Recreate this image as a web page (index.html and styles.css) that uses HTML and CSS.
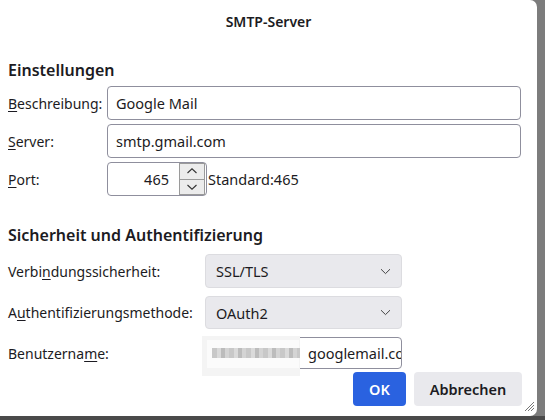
FILE: index.html
```html
<!DOCTYPE html>
<html lang="de">
<head>
<meta charset="utf-8">
<title>SMTP-Server</title>
<link rel="stylesheet" href="styles.css">
</head>
<body>
<div class="dialog">
  <div class="title">SMTP-Server</div>
  <div class="content">
    <h2 class="heading">Einstellungen</h2>
    <div class="grid grid-settings">
      <label class="label"><u>B</u>eschreibung:</label>
      <div class="input">Google Mail</div>
      <label class="label"><u>S</u>erver:</label>
      <div class="input">smtp.gmail.com</div>
      <label class="label"><u>P</u>ort:</label>
      <div class="port-row">
        <div class="port">
          <span class="port-value">465</span>
          <div class="spinner">
            <div class="spin spin-up"><svg width="12" height="8" viewBox="0 0 12 8"><path d="M1.5 6 L6 1.8 L10.5 6" fill="none" stroke="#333" stroke-width="1.1"/></svg></div>
            <div class="spin spin-down"><svg width="12" height="8" viewBox="0 0 12 8"><path d="M1.5 2 L6 6.2 L10.5 2" fill="none" stroke="#333" stroke-width="1.1"/></svg></div>
          </div>
        </div>
        <span class="default">Standard:465</span>
      </div>
    </div>

    <h2 class="heading heading-security">Sicherheit und Authentifizierung</h2>
    <div class="grid grid-security">
      <label class="label">Verbi<u>n</u>dungssicherheit:</label>
      <div class="select"><span>SSL/TLS</span><svg width="11" height="7" viewBox="0 0 11 7"><path d="M1 1.2 L5.5 5.6 L10 1.2" fill="none" stroke="#444" stroke-width="1"/></svg></div>
      <label class="label">A<u>u</u>thentifizierungsmethode:</label>
      <div class="select select-auth"><span>OAuth2</span><svg width="11" height="7" viewBox="0 0 11 7"><path d="M1 1.2 L5.5 5.6 L10 1.2" fill="none" stroke="#444" stroke-width="1"/></svg></div>
      <label class="label">Benutzerna<u>m</u>e:</label>
      <div class="user">
        <div class="input input-user"><span class="user-text">googlemail.com</span></div>
        <div class="blur"></div>
      </div>
    </div>

    <div class="buttons">
      <button class="btn btn-primary">OK</button>
      <button class="btn">Abbrechen</button>
    </div>
  </div>
  <svg class="grip" width="12" height="12" viewBox="0 0 12 12"><path d="M11 2 L2 11 M11 5 L5 11 M11 8 L8 11" stroke="#777" stroke-width="1"/></svg>
</div>
</body>
</html>
```
FILE: styles.css
```css
html, body {
  margin: 0;
  padding: 0;
}
body {
  width: 545px;
  height: 420px;
  background: linear-gradient(to bottom, #7c7c7c 0, #7c7c7c 416px, #4a4a4a 416px);
  font-family: "Noto Sans", "Open Sans", sans-serif;
  color: #1c1b22;
  font-size: 14px;
  overflow: hidden;
}
.dialog {
  position: relative;
  width: 537px;
  height: 416px;
  background: #ffffff;
  border-radius: 0 7px 7px 0;
}
.title {
  height: 44px;
  line-height: 44px;
  text-align: center;
  font-size: 14px;
  font-weight: 600;
}
.content {
  padding: 0 15px 0 8px;
}
.heading {
  margin: 15px 0 5px 0;
  font-size: 16px;
  line-height: 22px;
  font-weight: 600;
}
.heading-security {
  margin: 28px 0 8px 0;
}
.grid {
  display: grid;
  row-gap: 4px;
  align-items: center;
}
.grid-settings {
  grid-template-columns: 99px 414px;
}
.grid-security {
  grid-template-columns: 197px 197px;
  row-gap: 8px;
}
.label {
  font-size: 14px;
  white-space: nowrap;
}
.label u {
  text-decoration-thickness: 1px;
  text-underline-offset: 2px;
}
.input {
  box-sizing: border-box;
  height: 34px;
  border: 1px solid #8f8f9d;
  border-radius: 4px;
  padding: 0 8px;
  display: flex;
  align-items: center;
  font-size: 14.5px;
  overflow: hidden;
  white-space: nowrap;
}
.port-row {
  display: flex;
  align-items: center;
}
.port {
  box-sizing: border-box;
  width: 100px;
  height: 34px;
  border: 1px solid #8f8f9d;
  border-radius: 4px;
  display: flex;
  align-items: center;
  justify-content: flex-end;
  padding-right: 1px;
}
.port-value {
  font-size: 14.5px;
  margin-right: 10px;
}
.spinner {
  display: flex;
  flex-direction: column;
  width: 26px;
  height: 32px;
  border: 1px solid #9a9a9a;
  box-sizing: border-box;
  background: #ececec;
}
.spin {
  flex: 1;
  display: flex;
  align-items: center;
  justify-content: center;
}
.spin-up {
  border-bottom: 1px solid #9a9a9a;
}
.default {
  margin-left: 1px;
  font-size: 14.5px;
}
.select {
  box-sizing: border-box;
  height: 34px;
  background: #e9e9ed;
  border: 1px solid #dcdce0;
  border-radius: 4px;
  display: flex;
  align-items: center;
  justify-content: space-between;
  padding: 0 10px 0 10px;
  font-size: 14.5px;
}
.select-auth {
  height: 33px;
}
.user {
  position: relative;
  height: 32px;
}
.input-user {
  height: 32px;
  justify-content: flex-start;
  padding-left: 102px;
  background: #fff;
}
.user-text {
  font-size: 14.5px;
}
.blur {
  position: absolute;
  left: -3px;
  top: -1px;
  width: 98px;
  height: 40px;
  background: #f4f4f4;
}
.blur::before {
  content: "";
  position: absolute;
  left: 5px;
  top: 4px;
  width: 92px;
  height: 28px;
  background: #fbfbfb;
}
.blur::after {
  content: "";
  position: absolute;
  left: 10px;
  top: 12px;
  width: 88px;
  height: 10px;
  background: repeating-linear-gradient(to right, #c8c8c8 0, #c8c8c8 5px, #dadada 5px, #dadada 9px, #bcbcbc 9px, #bcbcbc 13px, #d4d4d4 13px, #d4d4d4 17px);
}
.buttons {
  display: flex;
  justify-content: flex-end;
  gap: 8px;
  margin-top: 3px;
}
.btn {
  font-family: "Noto Sans", "Open Sans", sans-serif;
  font-size: 14.5px;
  font-weight: 600;
  height: 34px;
  border: none;
  border-radius: 4px;
  background: #e9e9ed;
  color: #1c1b22;
  padding: 0;
  width: 108px;
}
.btn-primary {
  background: #2a62e0;
  color: #fff;
  width: 53px;
}
.grip {
  position: absolute;
  right: 2px;
  bottom: 4px;
}
```
